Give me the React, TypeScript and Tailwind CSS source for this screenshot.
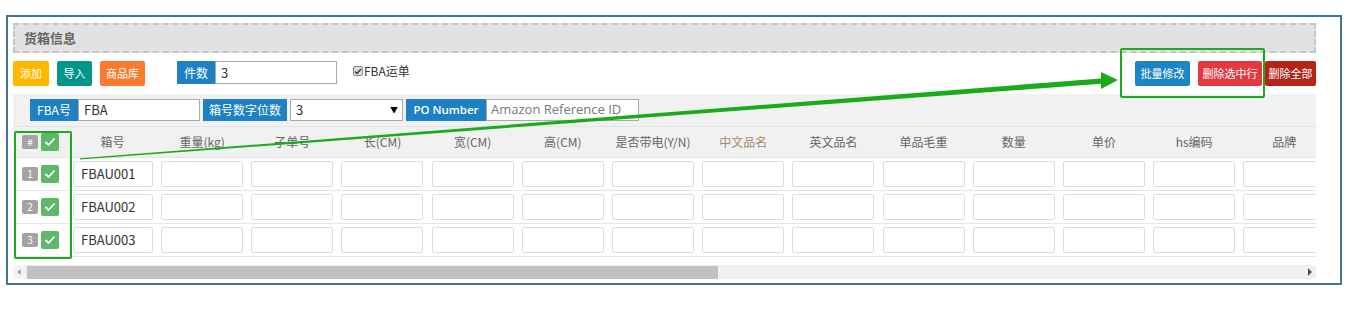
import React from "react";

const columns = [
  "重量(kg)",
  "子单号",
  "长(CM)",
  "宽(CM)",
  "高(CM)",
  "是否带电(Y/N)",
  "中文品名",
  "英文品名",
  "单品毛重",
  "数量",
  "单价",
  "hs编码",
  "品牌",
];

const rows = ["FBAU001", "FBAU002", "FBAU003"];

const gridCols = "grid grid-cols-[59px_85px_repeat(13,90.2px)]";

function CheckBox() {
  return (
    <span className="flex h-[18px] w-[18px] items-center justify-center rounded-[2px] bg-[#5fb86a]">
      <svg width="12" height="10" viewBox="0 0 12 10" fill="none">
        <polyline points="1.5,5 4.5,8 10.5,1.5" stroke="white" strokeWidth="1.8" />
      </svg>
    </span>
  );
}

function Badge({ text }: { text: string }) {
  return (
    <span className="flex h-[14px] w-[16px] items-center justify-center rounded-[2px] bg-[#a3a3a3] text-[10px] leading-none text-white">
      {text}
    </span>
  );
}

function Btn({ label, className }: { label: string; className: string }) {
  return (
    <button className={"flex h-[25px] items-center justify-center rounded-[2px] text-[11px] leading-none text-white " + className}>
      {label}
    </button>
  );
}

export default function App() {
  return (
    <div className="relative h-[309px] w-[1353px] overflow-hidden bg-white pl-[6px] pt-[15px] font-['Noto_Sans_CJK_SC',sans-serif] text-[#333]">
      <div className="h-[270px] w-[1336px] border-2 border-[#4272a0] pl-[5px] pt-[6px]">
        <div className="w-[1303px]">
          {/* 标题 */}
          <div className="flex h-[30px] items-center border-2 border-dashed border-[#c6c6c6] bg-[#e2e2e2] pl-[9px] text-[13px] font-bold text-[#666]">
            货箱信息
          </div>

          {/* 操作按钮 */}
          <div className="mt-[8px] flex h-[25px] items-start">
            <Btn label="添加" className="w-[36px] bg-[#ffb800]" />
            <Btn label="导入" className="ml-[8px] w-[35px] bg-[#009688]" />
            <Btn label="商品库" className="ml-[8px] w-[45px] bg-[#fb7a2e]" />
            <div className="ml-[32px] flex h-[23px]">
              <span className="flex w-[38px] items-center justify-center bg-[#1e81c4] text-[12px] text-white">件数</span>
              <span className="flex w-[122px] items-center border border-[#aaa] pl-[5px] text-[13px]">3</span>
            </div>
            <label className="ml-[16px] flex h-[20px] items-center text-[12px] text-[#333]">
              <span className="mr-[1px] flex h-[10px] w-[10px] items-center justify-center rounded-[2px] border border-[#888] bg-[#ddd]">
                <svg width="8" height="7" viewBox="0 0 8 7" fill="none">
                  <polyline points="1,3.5 3,5.5 7,1" stroke="#333" strokeWidth="1.4" />
                </svg>
              </span>
              FBA运单
            </label>
            <div className="ml-auto flex">
              <Btn label="批量修改" className="w-[55px] bg-[#1e84c6]" />
              <Btn label="删除选中行" className="ml-[8px] w-[64px] bg-[#e5383f]" />
              <Btn label="删除全部" className="ml-[3px] w-[51px] bg-[#b42418]" />
            </div>
          </div>

          {/* FBA 设置 */}
          <div className="mt-[8px] flex h-[32px] items-center bg-[#f1f1f1] pl-[17px] text-[12px]">
            <span className="flex h-[22px] w-[48px] items-center justify-center bg-[#1e81c4] text-white">FBA号</span>
            <span className="flex h-[22px] w-[122px] items-center border border-[#aaa] bg-white pl-[5px] text-[13px]">FBA</span>
            <span className="ml-[3px] flex h-[22px] w-[84px] items-center justify-center bg-[#1e81c4] text-white">箱号数字位数</span>
            <span className="ml-[3px] flex h-[22px] w-[113px] items-center justify-between border border-[#aaa] bg-white pl-[5px] pr-[4px] text-[13px]">
              3<span className="text-[8px] text-black">▼</span>
            </span>
            <span className="ml-[3px] flex h-[22px] w-[80px] items-center justify-center bg-[#1e81c4] font-['Open_Sans',sans-serif] text-[11.5px] font-semibold text-white">
              PO Number
            </span>
            <span className="flex h-[22px] w-[153px] items-center border border-[#aaa] bg-white pl-[4px] font-['Open_Sans',sans-serif] text-[13px] text-[#777]">
              Amazon Reference ID
            </span>
          </div>

          {/* 表格 */}
          <div className="overflow-hidden">
            <div className={gridCols + " h-[32px] w-max items-center border-y border-[#e4e4e4] bg-[#f1f1f1] text-[12px] text-[#666]"}>
              <div className="flex items-center pl-[9px]">
                <Badge text="#" />
                <span className="ml-[3px]">
                  <CheckBox />
                </span>
              </div>
              <div className="pr-[4px] text-center">箱号</div>
              {columns.map((c) => (
                <div key={c} className={"text-center " + (c === "中文品名" ? "text-[#a08a70]" : "")}>
                  {c}
                </div>
              ))}
            </div>
            {rows.map((r, i) => (
              <div key={r} className={gridCols + " h-[33px] w-max items-center border-b border-[#e6e6e6]"}>
                <div className="flex items-center pl-[9px]">
                  <Badge text={String(i + 1)} />
                  <span className="ml-[3px]">
                    <CheckBox />
                  </span>
                </div>
                <div className="pl-[1px]">
                  <div className="flex h-[26px] w-[80px] items-center rounded-[2px] border border-[#ddd] pl-[7px] text-[13px]">{r}</div>
                </div>
                {columns.map((c) => (
                  <div key={c} className="pl-[4px]">
                    <div className="h-[26px] w-[82px] rounded-[2px] border border-[#ddd] bg-white" />
                  </div>
                ))}
              </div>
            ))}
          </div>

          {/* 滚动条 */}
          <div className="mt-[8px] flex h-[14px] items-center bg-[#f1f1f1]">
            <span className="ml-[4px] h-0 w-0 border-y-[3px] border-r-[4px] border-y-transparent border-r-[#aaa]" />
            <span className="ml-[6px] h-[13px] w-[691px] bg-[#c1c1c1]" />
            <span className="ml-auto mr-[4px] h-0 w-0 border-y-[4px] border-l-[4px] border-y-transparent border-l-[#555]" />
          </div>
        </div>
      </div>

      {/* 标注 */}
      <div className="absolute left-[1120px] top-[48px] h-[50px] w-[145px] rounded-[2px] border-2 border-[#1fa91f]" />
      <div className="absolute left-[14px] top-[131px] h-[128px] w-[58px] rounded-[2px] border-2 border-[#1fa91f]" />
      <svg className="absolute left-0 top-0" width="1353" height="309">
        <polygon points="80,158.3 1104,78.2 1104,83.6 80,159.6" fill="#1aab1a" />
        <polygon points="1101,72 1118,80 1101,89" fill="#1aab1a" />
      </svg>
    </div>
  );
}
